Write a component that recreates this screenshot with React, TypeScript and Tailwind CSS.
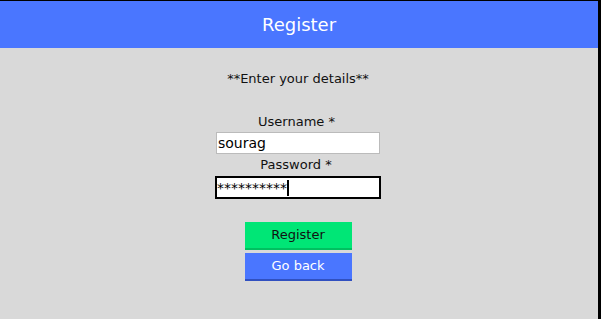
import { useState } from "react";

export default function App() {
  const [username, setUsername] = useState("sourag");
  const [password, setPassword] = useState("**********");

  return (
    <div className="h-[319px] w-[601px] overflow-hidden bg-black pt-px font-['DejaVu_Sans',sans-serif]">
      <div className="flex h-[318px] w-[598px] flex-col bg-[#d9d9d9]">
        <div className="flex h-[47px] items-center justify-center bg-[#4a76ff] text-[18px] text-white">
          Register
        </div>

        <div className="flex w-[596px] flex-col items-center text-[13px] text-[#111]">
          <p className="mt-[21px] leading-[20px]">**Enter your details**</p>

          <label className="mt-[23px] pr-[3px] leading-[20px]">Username *</label>
          <input
            value={username}
            onChange={(e) => setUsername(e.target.value)}
            className="mt-0 h-[22px] w-[164px] border border-[#bbb] bg-white px-px text-[14px] leading-[18px] text-black outline-none"
          />

          <label className="mt-[1px] pr-[4px] leading-[20px]">Password *</label>
          <div className="mt-[1px] flex h-[23px] w-[166px] items-center border-2 border-black bg-white px-0 text-[14px] leading-[18px] text-black">
            <span>{password}</span>
            <span className="h-[16px] w-[2px] bg-black" />
          </div>

          <button
            onClick={() => setPassword(password)}
            className="mt-[23px] h-[28px] w-[107px] border-b-2 border-[#00c060] bg-[#00e676] text-[13px] text-[#111]"
          >
            Register
          </button>
          <button className="mt-[3px] h-[28px] w-[107px] border-b-2 border-[#3050c0] bg-[#4a76ff] text-[13px] text-white">
            Go back
          </button>
        </div>
      </div>
    </div>
  );
}
